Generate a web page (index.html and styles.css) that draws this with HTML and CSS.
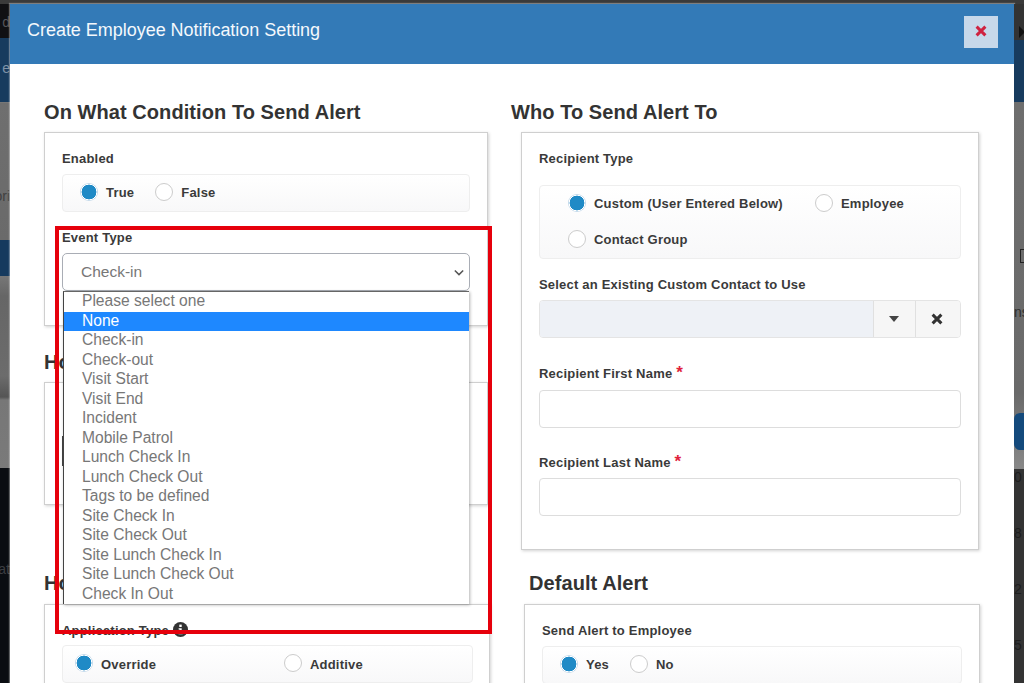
FILE: index.html
```html
<!DOCTYPE html>
<html lang="en">
<head>
<meta charset="utf-8">
<title>Create Employee Notification Setting</title>
<link rel="stylesheet" href="styles.css">
</head>
<body>
<div class="page">
  <aside class="side side-left">
    <div class="strip s-black">d</div>
    <div class="strip s-navy">e</div>
    <div class="strip s-grey">ori</div>
    <div class="strip s-navy2"></div>
    <div class="strip s-grey2"></div>
    <div class="strip s-ink">at</div>
  </aside>

  <main class="modal">
    <header class="modal-head">
      <h1 class="modal-title">Create Employee Notification Setting</h1>
      <button class="close" type="button" aria-label="Close">
        <svg width="12" height="12" viewBox="0 0 12 12"><path d="M1.6 1.6l8.8 8.8M10.4 1.6l-8.8 8.8" stroke="#cf2240" stroke-width="3" fill="none"/></svg>
      </button>
    </header>

    <div class="modal-body">
      <section class="col col-left">
        <h2 class="heading">On What Condition To Send Alert</h2>
        <div class="panel panel-a">
          <label class="label">Enabled</label>
          <div class="radios radios-a">
            <span class="radio on"></span><span class="opt opt-true">True</span>
            <span class="radio"></span><span class="opt">False</span>
          </div>
          <label class="label label-event">Event Type</label>
          <div class="select-wrap">
            <div class="select">
              <span>Check-in</span>
              <svg width="10" height="7" viewBox="0 0 12 8"><path d="M1 1.5l5 5 5-5" stroke="#555" stroke-width="1.8" fill="none"/></svg>
            </div>
            <ul class="dropdown">
              <li>Please select one</li>
              <li class="active">None</li>
              <li>Check-in</li>
              <li>Check-out</li>
              <li>Visit Start</li>
              <li>Visit End</li>
              <li>Incident</li>
              <li>Mobile Patrol</li>
              <li>Lunch Check In</li>
              <li>Lunch Check Out</li>
              <li>Tags to be defined</li>
              <li>Site Check In</li>
              <li>Site Check Out</li>
              <li>Site Lunch Check In</li>
              <li>Site Lunch Check Out</li>
              <li>Check In Out</li>
            </ul>
          </div>
        </div>

        <h2 class="heading heading-mid">How</h2>
        <div class="panel panel-b">
          <div class="hidden-field"></div>
        </div>

        <h2 class="heading heading-low">How</h2>
        <div class="panel panel-c">
          <label class="label label-info">Application Type
            <svg class="info" width="15" height="15" viewBox="0 0 15 15"><circle cx="7.5" cy="7.5" r="7.5" fill="#333"/><rect x="6.3" y="2.6" width="2.4" height="2.4" fill="#fff"/><path d="M5.6 6.2h3.1v4.6h1v1.4H5.5v-1.4h1V7.6h-.9z" fill="#fff"/></svg>
          </label>
          <div class="radios radios-c">
            <span class="radio on"></span><span class="opt opt-override">Override</span>
            <span class="radio"></span><span class="opt">Additive</span>
          </div>
        </div>
      </section>

      <section class="col col-right">
        <h2 class="heading">Who To Send Alert To</h2>
        <div class="panel panel-r">
          <label class="label">Recipient Type</label>
          <div class="radios radios-r">
            <div class="radio-row">
              <span class="radio on"></span><span class="opt opt-custom">Custom (User Entered Below)</span>
              <span class="radio"></span><span class="opt">Employee</span>
            </div>
            <div class="radio-row">
              <span class="radio"></span><span class="opt">Contact Group</span>
            </div>
          </div>
          <label class="label label-existing">Select an Existing Custom Contact to Use</label>
          <div class="input-group">
            <div class="ig-value"></div>
            <div class="ig-btn ig-caret"><svg width="10" height="6" viewBox="0 0 10 6"><path d="M0 0h10L5 6z" fill="#444"/></svg></div>
            <div class="ig-btn ig-clear"><svg width="12" height="12" viewBox="0 0 12 12"><path d="M1.6 1.6l8.8 8.8M10.4 1.6l-8.8 8.8" stroke="#333" stroke-width="3" fill="none"/></svg></div>
          </div>
          <label class="label label-first">Recipient First Name <span class="req">*</span></label>
          <div class="input"></div>
          <label class="label label-last">Recipient Last Name <span class="req">*</span></label>
          <div class="input"></div>
        </div>

        <h2 class="heading heading-default">Default Alert</h2>
        <div class="panel panel-d">
          <label class="label">Send Alert to Employee</label>
          <div class="radios radios-d">
            <span class="radio on"></span><span class="opt opt-yes">Yes</span>
            <span class="radio"></span><span class="opt">No</span>
          </div>
        </div>
      </section>
    </div>
  </main>

  <aside class="side side-right">
    <div class="strip r-dark"><svg width="6" height="12" viewBox="0 0 6 12"><path d="M0 0l6 6-6 6z" fill="#111"/></svg></div>
    <div class="strip r-navy"></div>
    <div class="strip r-grey"><span class="r-icon"></span><span class="r-ns">ns</span></div>
    <div class="strip r-grey2"><span class="r-pill"></span></div>
    <div class="strip r-ink"><span>0</span><span>8</span><span>2</span><span>5</span></div>
  </aside>

  <div class="callout"></div>
</div>
</body>
</html>
```

FILE: styles.css
```css
* { box-sizing: border-box; }

html, body { margin: 0; padding: 0; }

body {
  font-family: "Liberation Sans", Arial, sans-serif;
  color: #333;
  background: #333;
}

.page {
  position: relative;
  display: flex;
  width: 1024px;
  height: 683px;
  overflow: hidden;
  background: #3a3a3a;
}

/* dimmed page behind the dialog */
.side {
  display: flex;
  flex-direction: column;
  flex: none;
  overflow: hidden;
  padding-top: 4px;
  font-size: 14px;
  white-space: nowrap;
}

.side-left { width: 10px; align-items: stretch; }
.side-right { width: 10px; }

.strip { flex: none; overflow: hidden; }

.side-left .strip { display: flex; justify-content: flex-end; }

.s-black { height: 34px; background: #101013; color: #55555a; line-height: 36px; }
.s-navy { height: 64px; background: #173b5e; color: #7f93a8; line-height: 60px; }
.s-grey {
  height: 138px;
  padding-top: 70px;
  color: #404040;
  line-height: 46px;
  background: linear-gradient(#6f6f6f, #6a6a6a);
  border-top: 1px solid #777;
}
.s-navy2 { height: 36px; background: #163a5e; }
.s-grey2 { height: 192px; background: linear-gradient(#777 0, #666 20px, #6c6c6c 100px, #555 121px, #777 124px, #7a7a7a 192px); }
.s-ink { height: 215px; padding-top: 93px; background: #0a0d12; color: #3c3e42; }

.r-dark { height: 36px; padding: 22px 0 0 5px; background: #333; }
.r-dark svg { display: block; }
.r-navy { height: 62px; background: #173b5e; }
.r-grey {
  display: flex;
  flex-direction: column;
  height: 291px;
  padding-top: 147px;
  background: linear-gradient(#6e6e6e, #6a6a6a);
  color: #2f2f2f;
}
.r-icon { display: block; width: 10px; height: 14px; margin-left: 6px; border: 1px solid #222; }
.r-ns { line-height: 16px; margin-top: 41px; }
.r-grey2 { height: 76px; padding-top: 20px; background: linear-gradient(#6a6a6a, #888); }
.r-pill { display: block; width: 10px; height: 37px; background: #144a7c; border-radius: 6px 0 0 6px; }
.r-ink {
  display: flex;
  flex-direction: column;
  gap: 40px;
  height: 215px;
  background: #333;
  color: #1e1e1e;
  line-height: 16px;
}

/* dialog */
.modal {
  flex: none;
  width: 1004px;
  margin-top: 4px;
  background: #fff;
  box-shadow: 0 0 1px 1px rgba(255, 255, 255, 0.35);
}

.modal-head {
  display: flex;
  align-items: flex-start;
  justify-content: space-between;
  height: 60px;
  padding: 12px 16px 0 17px;
  background: #337ab7;
}

.modal-title {
  margin: 0;
  color: #f4f8fc;
  font-size: 18px;
  font-weight: 400;
  line-height: 28px;
  letter-spacing: -0.03px;
}

.close {
  display: flex;
  align-items: center;
  justify-content: center;
  width: 34px;
  height: 32px;
  padding: 0 0 3px;
  border: 0;
  background: #c7d8ea;
}

.modal-body {
  display: flex;
  padding: 36px 0 0 34px;
}

.col { flex: none; }
.col-left { width: 467px; }
.col-right { width: 470px; }

.heading {
  height: 24px;
  margin: 0 0 8px;
  color: #333;
  font-size: 20px;
  font-weight: 700;
  line-height: 24px;
  letter-spacing: 0.07px;
}

.heading-mid { margin-top: 24px; }
.heading-low { margin-top: 66px; margin-bottom: 9px; }
.heading-default { margin: 21px 0 9px 18px; }

.panel {
  padding: 17px 17px 0;
  border: 1px solid #cfcfcf;
  background: #fff;
  box-shadow: 1px 1px 3px rgba(0, 0, 0, 0.18);
}

.panel-a { width: 444px; height: 194px; }
.panel-b { width: 444px; height: 123px; }
.panel-c { width: 446px; height: 120px; }
.panel-r { width: 458px; height: 418px; margin-left: 10px; }
.panel-d { width: 456px; height: 120px; margin-left: 13px; }

.label {
  display: block;
  height: 16px;
  margin-bottom: 8px;
  color: #3a3a3a;
  font-size: 13px;
  font-weight: 700;
  line-height: 18px;
  letter-spacing: 0.2px;
  white-space: nowrap;
}

.label-event { margin-top: 17px; }
.label-existing { margin-top: 17px; }
.label-first { margin-top: 27px; margin-bottom: 9px; }
.label-last { margin-top: 26px; }
.label-info { margin-bottom: 7px; }

.info { vertical-align: -2px; }
.req { color: #e0223c; font-size: 17px; line-height: 14px; }

.radios {
  border: 1px solid #eee;
  border-radius: 4px;
  background: linear-gradient(#fff, #f8f8f9);
  font-size: 13px;
}

.radios-a, .radios-c, .radios-d {
  display: flex;
  align-items: center;
  height: 38px;
  padding-bottom: 3px;
}

.radios-a .opt, .radios-d .opt { margin-top: 2px; }
.radios-c .opt { margin-top: 4px; }

.radios-a { padding-left: 17px; }
.radios-c { width: 411px; padding-left: 12px; }
.radios-d { width: 420px; padding-left: 17px; }

.radios-r {
  display: flex;
  flex-direction: column;
  gap: 18px;
  height: 74px;
  margin-top: 19px;
  padding: 8px 0 0 28px;
}

.radio-row { display: flex; align-items: center; height: 18px; }

.radio {
  flex: none;
  width: 18px;
  height: 18px;
  border: 1px solid #ccc;
  border-radius: 50%;
  background: #fff;
}

.radio.on {
  border: 0;
  background: radial-gradient(circle closest-side, #1f8ac6 80%, #fff 85%, #fff 89%, #c4d9ea 94%);
}

.opt {
  margin-left: 8px;
  color: #3a3a3a;
  font-weight: 700;
  letter-spacing: 0.2px;
  white-space: nowrap;
}

.opt-true { margin-right: 21px; }
.opt-override { width: 175px; margin-right: 8px; }
.opt-yes { margin-right: 21px; }
.opt-custom { width: 212px; margin-right: 9px; }

.select-wrap { position: relative; }

.select {
  display: flex;
  align-items: center;
  justify-content: space-between;
  height: 38px;
  padding: 0 5px 0 18px;
  border: 1px solid #a9adb5;
  border-radius: 5px;
  background: #fff;
  color: #777;
  font-size: 15.5px;
}

.dropdown {
  position: absolute;
  top: 38px;
  left: 1px;
  z-index: 5;
  width: 406px;
  height: 313px;
  margin: 0;
  padding: 0;
  border-top: 1px solid #666;
  border-left: 1px solid #444;
  background: #fff;
  box-shadow: 1px 1px 3px rgba(0, 0, 0, 0.3);
  list-style: none;
  color: #777;
  font-size: 15.6px;
}

.dropdown li {
  height: 19.5px;
  padding-left: 18px;
  line-height: 17px;
}

.dropdown .active { background: #1e88ff; color: #fff; }

.hidden-field {
  width: 408px;
  height: 30px;
  margin-top: 36px;
  border-left: 1px solid #444;
}

.input-group {
  display: flex;
  height: 38px;
  border: 1px solid #e4e4e4;
  border-radius: 4px;
  overflow: hidden;
}

.ig-value { flex: 1; background: #eef1f6; }

.ig-btn {
  display: flex;
  flex: none;
  align-items: center;
  justify-content: center;
  padding-right: 2px;
  background: #f6f6f6;
  border-left: 1px solid #e0e0e0;
}

.ig-caret { width: 42px; }
.ig-clear { width: 45px; }

.input {
  height: 38px;
  border: 1px solid #ddd;
  border-radius: 4px;
  background: #fff;
}

/* red annotation drawn over the screenshot */
.callout {
  position: absolute;
  top: 226px;
  left: 55px;
  z-index: 10;
  width: 437px;
  height: 408px;
  border: 4px solid #e6000c;
}
```
